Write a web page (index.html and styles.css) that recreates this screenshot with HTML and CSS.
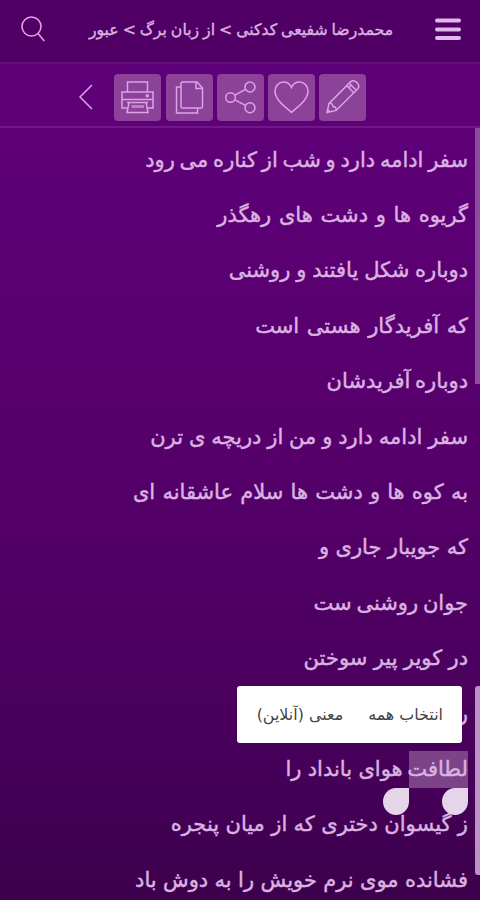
FILE: index.html
```html
<!DOCTYPE html>
<html lang="fa" dir="rtl">
<head>
<meta charset="utf-8">
<title>عبور</title>
<link rel="stylesheet" href="styles.css">
</head>
<body>
<header class="topbar">
  <svg class="menu" viewBox="0 0 26 23"><path d="M2 2.5H24M2 11.5H24M2 20H24"/></svg>
  <h1 class="crumbs">محمدرضا شفیعی کدکنی &gt; از زبان برگ &gt; عبور</h1>
  <svg class="search" viewBox="0 0 24 26"><circle cx="10.5" cy="10.5" r="9.5"/><path d="M17 17.5L23.3 25"/></svg>
</header>
<nav class="tools">
  <span class="tool"><svg viewBox="0 0 47 47"><g transform="translate(23.500 23) rotate(45)"><path d="M-5 -17C-4 -21.500 4 -21.500 5 -17V14L0 22L-5 14ZM-5 -14.500H5M-5 -11H5M-2.200 -14.500V-11M-5 14Q-2.500 11 0 13.500Q2.500 11 5 14M-1.500 19.500H1.500"/></g></svg></span>
  <span class="tool"><svg viewBox="0 0 47 47"><path d="M23.500 38.500C19 34 7 26.500 7 17C7 12 11 8 15.500 8C19.500 8 22 10 23.500 13.500C25 10 27.500 8 31.500 8C36 8 40 12 40 17C40 26.500 28 34 23.500 38.500Z"/></svg></span>
  <span class="tool"><svg viewBox="0 0 47 47"><circle cx="13.500" cy="23.500" r="4.800"/><circle cx="33" cy="13" r="5"/><circle cx="33" cy="33.700" r="5"/><path d="M17.900 21.100L28.500 15.300M17.900 25.900L28.500 31.400"/></svg></span>
  <span class="tool"><svg viewBox="0 0 47 47"><path d="M17 8H31L36.500 14V32.500Q36.500 34 35 34H16.500Q15 34 15 32.500V10Q15 8 17 8ZM30 8V14.500H36.500M15 13H10.500V39H31.500V34"/></svg></span>
  <span class="tool"><svg viewBox="0 0 47 47"><path d="M13.500 18V8H33.500V18M13 34H8V18H39V34H33.500M8 25.500H39M15 28.500H32L34 38.500H13ZM13 28.500H34"/><path class="soft" d="M17.500 32.500H30"/><circle cx="33.300" cy="21.800" r="1"/></svg></span>
  <svg class="back" viewBox="0 0 16 26"><path d="M14 1L2 13L14 25"/></svg>
</nav>
<main class="poem">
  <p class="tight">سفر ادامه دارد و شب از کناره می رود</p>
  <p class="loose">گریوه ها و دشت های رهگذر</p>
  <p class="snug">دوباره شکل یافتند و روشنی</p>
  <p class="loose">که آفریدگار هستی است</p>
  <p class="tight">دوباره آفریدشان</p>
  <p class="snug">سفر ادامه دارد و من از دریچه ی ترن</p>
  <p class="airy">به کوه ها و دشت ها سلام عاشقانه ای</p>
  <p>که جویبار جاری و</p>
  <p class="tight">جوان روشنی ست</p>
  <p>در کویر پیر سوختن</p>
  <p class="covered">ر<span class="popup"><span>انتخاب همه</span><span>معنی (آنلاین)</span></span></p>
  <p><mark>لطافت<i class="grip start"></i><i class="grip end"></i></mark> هوای بانداد را</p>
  <p>ز گیسوان دختری که از میان پنجره</p>
  <p>فشانده موی نرم خویش را به دوش باد</p>
  <i class="scroll upper"></i>
  <i class="scroll lower"></i>
</main>
</body>
</html>
```
FILE: styles.css
```css
* { box-sizing: border-box; }
body {
  margin: 0;
  width: 480px;
  height: 900px;
  overflow: hidden;
  display: flex;
  flex-direction: column;
  font-family: "DejaVu Sans", sans-serif;
  color: #dab2e1;
  background: linear-gradient(#5e0079 0, #5e0078 130px, #55006a 480px, #47005a 760px, #3d004c 900px);
}
svg { fill: none; stroke: #dda3e5; stroke-width: 1.5; flex: none; }
.topbar {
  height: 64px;
  flex: none;
  display: flex;
  align-items: center;
  justify-content: space-between;
  padding: 0 19px 4px 21px;
  background: #500064;
  border-bottom: 2px solid #650f7a;
}
.menu { width: 26px; height: 23px; stroke: #e0b8ea; stroke-width: 4; stroke-linecap: round; }
.search { width: 24px; height: 26px; stroke-width: 1.6; }
.crumbs {
  margin: 1px -1px 0 1px;
  font-size: 15.7px;
  font-weight: 400;
  word-spacing: -1px;
  white-space: nowrap;
  -webkit-text-stroke: 0.4px;
}
.tools {
  height: 64px;
  flex: none;
  display: flex;
  align-items: center;
  gap: 4.2px;
  padding: 4px 113.8px 0 0;
  border-bottom: 2px solid #701885;
}
.tool { width: 47px; height: 47px; border-radius: 4px; background: #8b4298; }
.tool svg { display: block; width: 47px; height: 47px; }
.tool .soft { stroke: #bd80c8; stroke-width: 3; }
.back { width: 16px; height: 26px; margin-right: 16px; }
.poem { flex: 1; position: relative; padding: 4.6px 12px 0; }
.poem p {
  margin: 0;
  height: 55.4px;
  line-height: 55.4px;
  font-size: 21px;
  word-spacing: -0.3px;
  white-space: nowrap;
  position: relative;
  -webkit-text-stroke: 0.45px;
}
.poem .tight { word-spacing: -1.9px; }
.poem .snug { word-spacing: -0.8px; }
.poem .loose { word-spacing: 1px; }
.poem .airy { word-spacing: 0.5px; }
.poem mark {
  position: relative;
  display: inline-block;
  width: 59px;
  height: 37px;
  line-height: 37px;
  color: inherit;
  background: #7d4389;
}
.grip { position: absolute; z-index: 1; top: 37px; width: 26px; height: 27px; background: #e5d5e8; border-radius: 50% 0 50% 50%; }
.grip.start { right: 0; }
.grip.end { left: 0; transform: translateX(-100%); }
.popup {
  position: absolute;
  z-index: 2;
  right: 6px;
  top: -0.6px;
  width: 225px;
  height: 57.5px;
  display: flex;
  align-items: center;
  gap: 25px;
  padding-right: 19px;
  background: #fff;
  border-radius: 3px;
  color: #444;
  font-size: 15.9px;
  line-height: 20px;
  word-spacing: 0;
  -webkit-text-stroke: 0;
}
.scroll { position: absolute; right: 0; width: 5px; background: #8c4d9c; }
.scroll.upper { top: 0; height: 256px; }
.scroll.lower { top: 558px; height: 189px; background: #bd91c6; border-radius: 3px 0 0 3px; }
```
